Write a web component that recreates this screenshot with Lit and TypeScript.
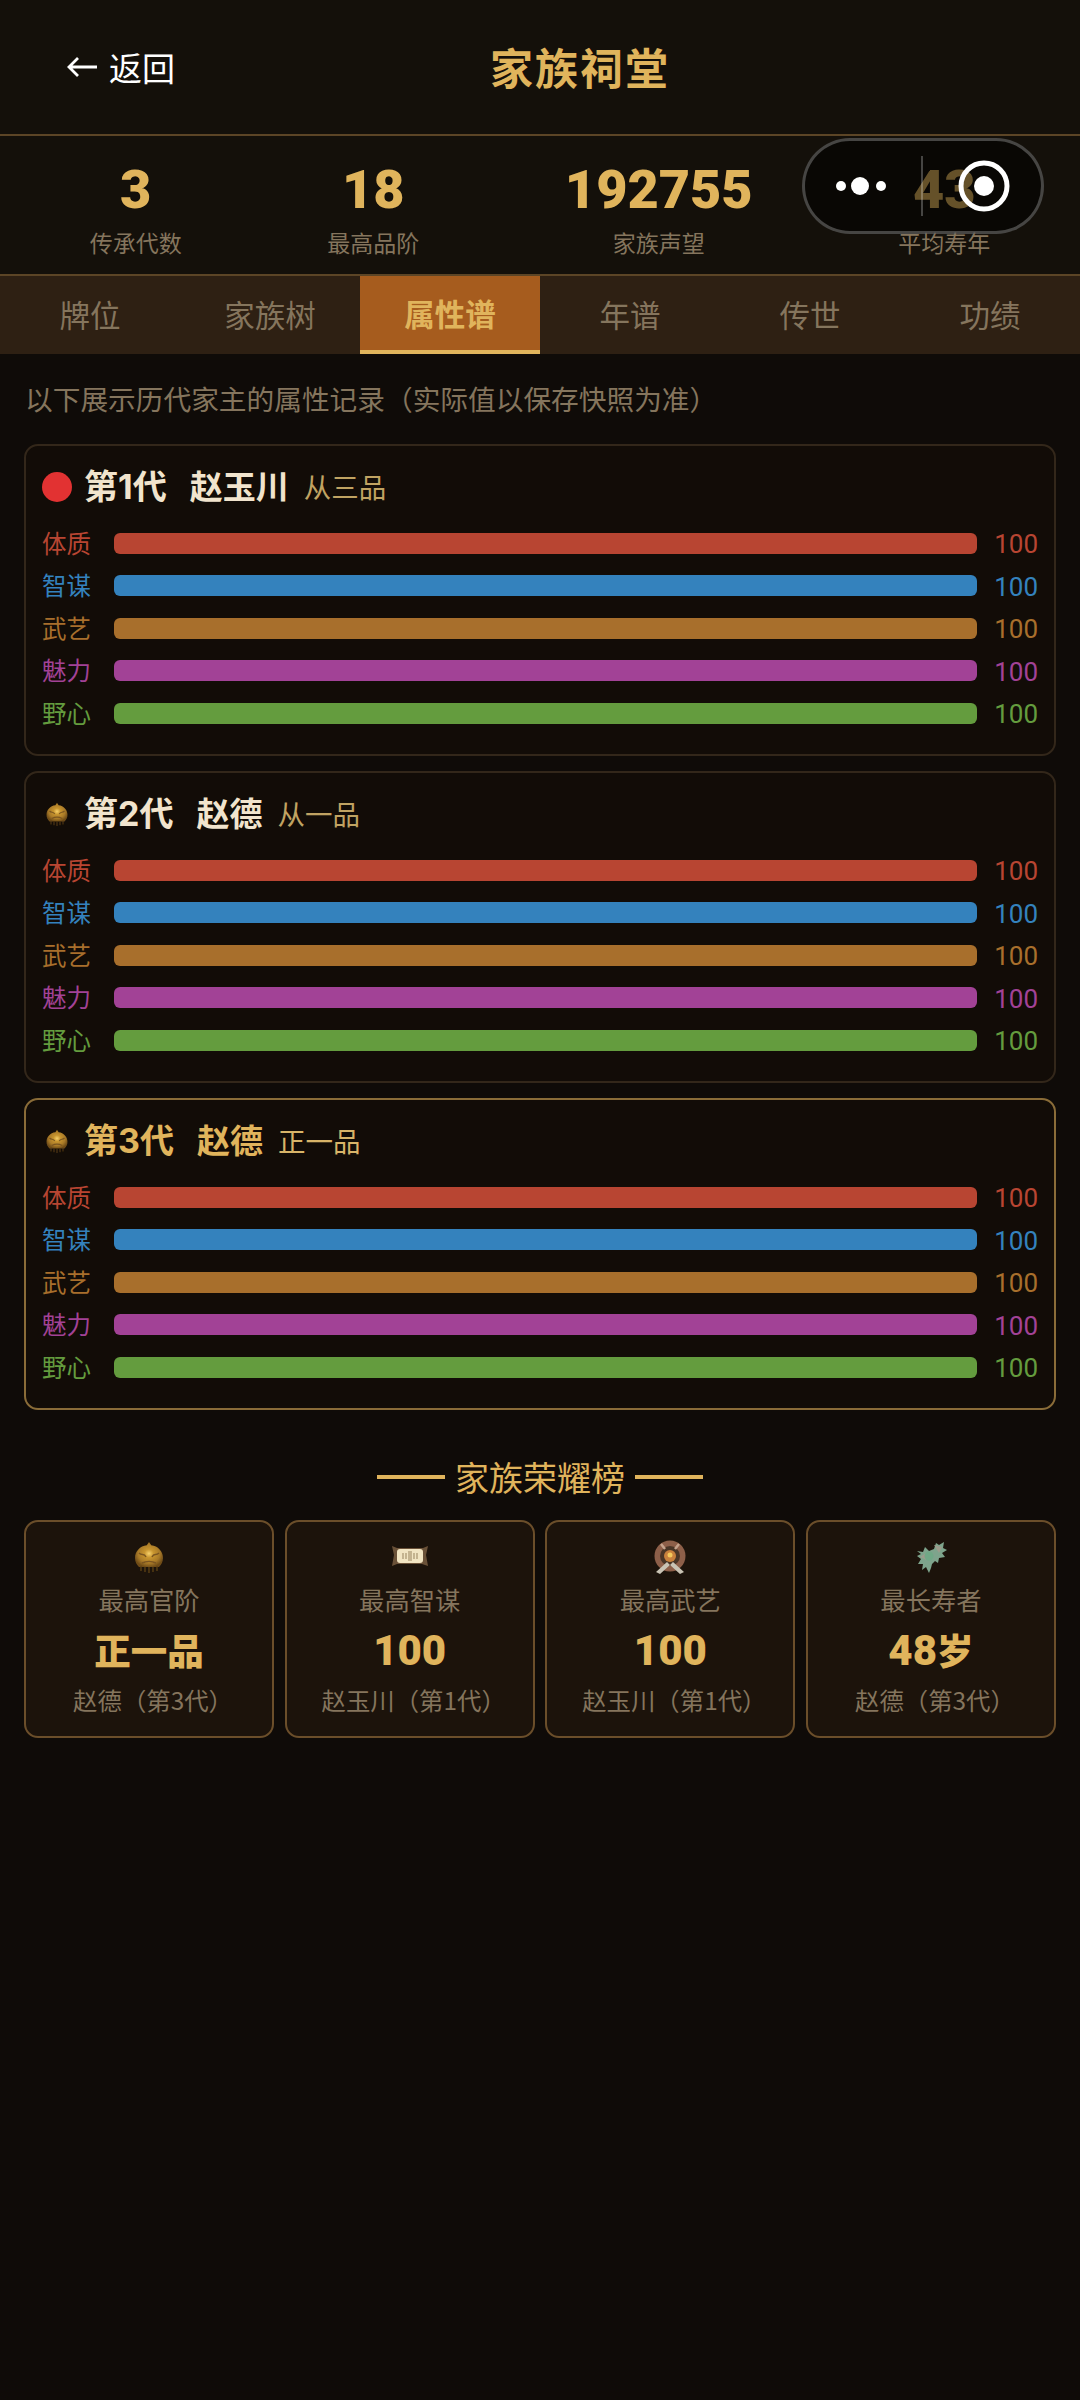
import { LitElement, html, css, svg } from "lit";
import { customElement } from "lit/decorators.js";

const ATTRS = [
  { n: "体质", c: "#b84532" },
  { n: "智谋", c: "#3482bd" },
  { n: "武艺", c: "#a86f2c" },
  { n: "魅力", c: "#a24296" },
  { n: "野心", c: "#649c3e" },
];

const crown = (size: number) => svg`<svg width=${size} height=${size} viewBox="0 0 32 32">
  <defs><radialGradient id="cr" cx="50%" cy="46%" r="55%"><stop offset="0" stop-color="#f6d06a"/><stop offset=".3" stop-color="#c8952f"/><stop offset=".7" stop-color="#a97a28"/><stop offset="1" stop-color="#6f4c18"/></radialGradient><filter id="b1" x="-10%" y="-10%" width="120%" height="120%"><feGaussianBlur stdDeviation=".7"/></filter></defs>
  <g filter="url(#b1)"><path d="M16 1l2.200 3.300C25 5 30 10.500 30 17c0 3.500-1.500 6.500-4 9H6c-2.500-2.500-4-5.500-4-9C2 10.500 7 5 13.800 4.300z" fill="url(#cr)"/><path d="M8 25v5M12 26v5M16 26v6M20 26v5M24 25v5" stroke="#5c4018" stroke-width="1.300"/><path d="M6 12c3 3 5 0 7 4M26 12c-3 3-5 0-7 4M9 22c4-2 10-2 14 0" stroke="#7a5520" stroke-width="1.500" fill="none"/></g>
</svg>`;

const scroll = svg`<svg width="38" height="32" viewBox="0 0 38 32">
  <defs><filter id="b2" x="-10%" y="-10%" width="120%" height="120%"><feGaussianBlur stdDeviation=".5"/></filter></defs>
  <g filter="url(#b2)"><path d="M1 5l5 2h26l5-2-2 9 2 11-6-2H6l-5 2 2-11z" fill="#6b5138"/><rect x="6" y="8" width="26" height="14" rx="3" fill="#f1e4c2"/><path d="M12 12v6M15 12v6M18 10v10M20 10v10M23 12v6M26 12v6" stroke="#a08c68" stroke-width="1.100"/></g>
</svg>`;

const emblem = svg`<svg width="34" height="36" viewBox="0 0 34 36">
  <defs><filter id="b3" x="-10%" y="-10%" width="120%" height="120%"><feGaussianBlur stdDeviation=".7"/></filter></defs>
  <g filter="url(#b3)"><circle cx="17" cy="17" r="15.500" fill="#8d5f48"/><circle cx="17" cy="17" r="10" fill="#4a3426"/><circle cx="17" cy="17" r="6" fill="#c8803c"/><circle cx="17" cy="16" r="2.500" fill="#f3c85c"/><path d="M3 33L14 23l3 3-10 9zM31 33L20 23l-3 3 10 9z" fill="#c9c3b4"/><path d="M8 5l4 5M26 5l-4 5" stroke="#c4a28c" stroke-width="2.500"/></g>
</svg>`;

const herb = svg`<svg width="34" height="36" viewBox="0 0 34 36">
  <defs><filter id="b4" x="-10%" y="-10%" width="120%" height="120%"><feGaussianBlur stdDeviation=".7"/></filter></defs>
  <g filter="url(#b4)"><path d="M3 12l6 1 2-5 4 4 5-2 2-6 3 2 5-3-1 6 4 2-5 3 3 4-6 1-1 5-3-2-3 3-1 4-2 5-3-6-4 3 1-6-5 0 3-5-4-3 4-2z" fill="#7ea48c"/><path d="M20 6l8 2-3 6zM6 18l6-4 1 7z" fill="#9c9c8c"/><circle cx="15" cy="17" r="4.500" fill="#6fa886"/></g>
</svg>`;

const GENS = [
  { gen: "第1代", name: "赵玉川", rank: "从三品", icon: "dot", cur: false },
  { gen: "第2代", name: "赵德", rank: "从一品", icon: "crown", cur: false },
  { gen: "第3代", name: "赵德", rank: "正一品", icon: "crown", cur: true },
];

const HONORS = [
  { icon: crown(32), t: "最高官阶", num: "", unit: "正一品", who: "赵德（第3代）" },
  { icon: scroll, t: "最高智谋", num: "100", unit: "", who: "赵玉川（第1代）" },
  { icon: emblem, t: "最高武艺", num: "100", unit: "", who: "赵玉川（第1代）" },
  { icon: herb, t: "最长寿者", num: "48", unit: "岁", who: "赵德（第3代）" },
];

@customElement("app-root")
export class AppRoot extends LitElement {
  static styles = css`
    :host {
      display: block;
      position: relative;
      width: 1080px;
      height: 2400px;
      background: #0f0b08;
      color: #e0b45c;
      font-family: "Noto Sans CJK SC", sans-serif;
      overflow: hidden;
    }
    .header {
      position: relative;
      display: flex;
      align-items: center;
      height: 134px;
      padding-left: 66px;
      background: #14100a;
      border-bottom: 2px solid #5c4526;
    }
    .back {
      display: flex;
      align-items: center;
      gap: 11px;
      width: 424px;
      color: #fff;
      font-size: 33px;
      line-height: 48px;
    }
    .title {
      font-size: 43px;
      font-weight: 700;
      letter-spacing: 2px;
      color: #e0b45c;
      padding-bottom: 3px;
    }
    .stats {
      display: flex;
      justify-content: space-around;
      padding: 0 17px;
      height: 140px;
      background: #14100a;
      box-sizing: border-box;
      border-bottom: 2px solid #5c4526;
    }
    .stat { display: flex; flex-direction: column; align-items: center; padding-top: 20px; }
    .stat b { font-family: "Roboto", sans-serif; font-size: 54px; line-height: 68px; font-weight: 900; color: #e0b45c; }
    .stat span { font-size: 23px; line-height: 34px; margin-top: 1px; color: #85755d; }
    .tabs { display: grid; grid-template-columns: repeat(6, 180px); height: 78px; background: #2e2013; }
    .tab {
      display: flex;
      align-items: center;
      justify-content: center;
      font-size: 30.500px;
      color: #85755d;
      box-sizing: border-box;
      padding-bottom: 3px;
    }
    .tab.on {
      background: #a65c1e;
      border-bottom: 4px solid #e0b45c;
      padding-bottom: 0;
      color: #e0b45c;
      font-weight: 700;
    }
    .main { padding: 0 24px; }
    .intro { font-size: 27.700px; line-height: 40px; color: #85755d; margin: 24px 0 0 1px; height: 66px; text-spacing-trim: space-all; }
    .cards { display: flex; flex-direction: column; gap: 15px; }
    .card {
      box-sizing: border-box;
      height: 312px;
      border: 2px solid #33271a;
      border-radius: 14px;
      background: #120c07;
      padding: 18px 16px 0 16px;
    }
    .card.cur { border-color: #8a6c38; }
    .head { display: flex; align-items: center; height: 46px; margin-bottom: 12px; }
    .ico { width: 34px; margin: 0 8px 0 -2px; display: flex; align-items: center; justify-content: center; flex: none; }
    .dot { width: 30px; height: 30px; border-radius: 50%; background: #e23232; }
    .ico svg { display: block; }
    .gen, .name { font-weight: 700; color: #f1e4cd; line-height: 46px; }
    .gen { font-size: 34px; margin-left: 2px; font-family: "Inter", "Noto Sans CJK SC", sans-serif; }
    .name { font-size: 33px; margin-left: 23px; padding-bottom: 4px; }
    .cur .gen, .cur .name { color: #e0b45c; }
    .rank { font-size: 27.500px; line-height: 46px; padding-bottom: 3px; color: #c0a362; margin-left: 15px; }
    .cur .rank { color: #d8b468; }
    .row { display: flex; align-items: center; height: 42.500px; }
    .lab { width: 72px; font-size: 24.500px; line-height: 36px; padding-bottom: 1px; flex: none; }
    .bar { flex: 1; height: 21px; border-radius: 6px; }
    .val { width: 61px; text-align: right; font-family: "Roboto", sans-serif; font-size: 26px; line-height: 36px; padding-top: 2px; flex: none; }
    .hhead {
      display: flex;
      align-items: center;
      justify-content: center;
      gap: 10px;
      font-size: 34px;
      color: #e0b45c;
      height: 50px;
      margin: 41px 0 19px;
    }
    .hhead i { width: 68px; height: 4px; background: #e0b45c; display: block; margin-top: 2px; }
    .honors { display: grid; grid-template-columns: repeat(4, 1fr); gap: 10.500px; }
    .honor {
      box-sizing: border-box;
      height: 218px;
      border: 2px solid #6b4e2a;
      border-radius: 14px;
      background: #1c130b;
      display: flex;
      flex-direction: column;
      align-items: center;
    }
    .hi { height: 36px; margin-top: 17px; display: flex; align-items: center; justify-content: center; }
    .hi svg { display: block; }
    .ht { font-size: 25.300px; line-height: 36px; color: #85755d; margin-top: 6px; }
    .hv { font-size: 36.500px; line-height: 50px; font-weight: 900; color: #e0b45c; margin-top: 8px; }
    .hv .num { font-family: "Roboto", sans-serif; font-size: 42px; }
    .hw { font-size: 24.400px; line-height: 36px; color: #85755d; margin: 6px 0 0 8px; text-spacing-trim: space-all; }
    .capsule {
      position: absolute;
      left: 802px;
      top: 138px;
      width: 242px;
      height: 96px;
      box-sizing: border-box;
      border: 3px solid rgba(255, 255, 255, .25);
      border-radius: 48px;
      background: rgba(0, 0, 0, .55);
    }
    .capsule svg { display: block; position: absolute; left: -3px; top: -3px; }
  `;

  render() {
    return html`
      <div class="header">
        <div class="back">
          <svg width="32" height="24" viewBox="0 0 32 24"><path d="M31 12H3M12 3l-9 9 9 9" fill="none" stroke="#fff" stroke-width="2.800"/></svg>
          <span>返回</span>
        </div>
        <div class="title">家族祠堂</div>
      </div>
      <div class="stats">
        ${[["3", "传承代数"], ["18", "最高品阶"], ["192755", "家族声望"], ["43", "平均寿年"]].map(
          ([v, l]) => html`<div class="stat"><b>${v}</b><span>${l}</span></div>`
        )}
      </div>
      <div class="tabs">
        ${["牌位", "家族树", "属性谱", "年谱", "传世", "功绩"].map(
          (t, i) => html`<div class="tab ${i === 2 ? "on" : ""}">${t}</div>`
        )}
      </div>
      <div class="main">
        <div class="intro">以下展示历代家主的属性记录（实际值以保存快照为准）</div>
        <div class="cards">
          ${GENS.map(
            (g) => html`<div class="card ${g.cur ? "cur" : ""}">
              <div class="head">
                <div class="ico">${g.icon === "dot" ? html`<div class="dot"></div>` : crown(24)}</div>
                <span class="gen">${g.gen}</span><span class="name">${g.name}</span><span class="rank">${g.rank}</span>
              </div>
              ${ATTRS.map(
                (a) => html`<div class="row">
                  <span class="lab" style="color:${a.c}">${a.n}</span>
                  <div class="bar" style="background:${a.c}"></div>
                  <span class="val" style="color:${a.c}">100</span>
                </div>`
              )}
            </div>`
          )}
        </div>
        <div class="hhead"><i></i><span>家族荣耀榜</span><i></i></div>
        <div class="honors">
          ${HONORS.map(
            (h) => html`<div class="honor">
              <div class="hi">${h.icon}</div>
              <div class="ht">${h.t}</div>
              <div class="hv"><span class="num">${h.num}</span>${h.unit}</div>
              <div class="hw">${h.who}</div>
            </div>`
          )}
        </div>
      </div>
      <div class="capsule">
        <svg width="242" height="96" viewBox="0 0 242 96">
          <circle cx="39" cy="48" r="5" fill="#fff"/>
          <circle cx="58" cy="48" r="9" fill="#fff"/>
          <circle cx="79" cy="48" r="5" fill="#fff"/>
          <path d="M120 18v60" stroke="rgba(255,255,255,.25)" stroke-width="2"/>
          <circle cx="182" cy="48" r="23" fill="none" stroke="#fff" stroke-width="5"/>
          <circle cx="182" cy="48" r="10" fill="#fff"/>
        </svg>
      </div>
    `;
  }
}
